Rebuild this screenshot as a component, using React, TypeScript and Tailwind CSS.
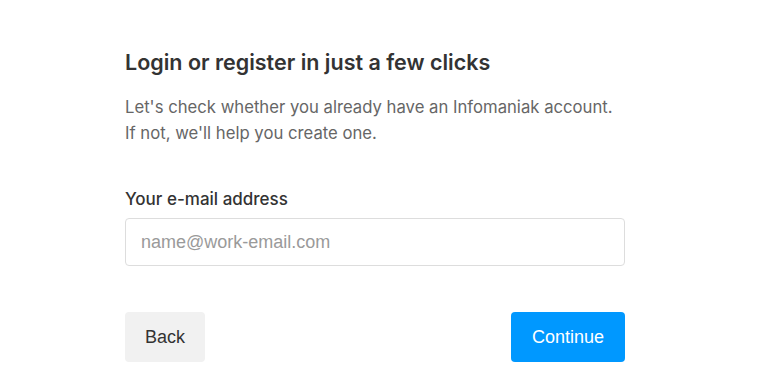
export default function App() {
  return (
    <div className="min-h-[390px] w-full bg-white font-['Inter',sans-serif]">
      <div className="ml-[125px] w-[500px] pt-[48px]">
        <h1 className="text-[21.5px] leading-[28px] font-semibold text-[#333333]">
          Login or register in just a few clicks
        </h1>
        <p className="mt-[18px] text-[16.7px] leading-[26px] text-[#666666]">
          Let's check whether you already have an Infomaniak account.
          <br />
          If not, we'll help you create one.
        </p>
        <label className="mt-[41px] block text-[17px] leading-[24px] font-medium text-[#333333]">
          Your e-mail address
        </label>
        <input
          type="email"
          placeholder="name@work-email.com"
          className="mt-[7px] block h-[48px] w-full rounded-[4px] border border-[#dddddd] px-[15px] font-['Liberation_Sans',sans-serif] text-[18px] text-[#333] placeholder:text-[#9a9a9a] outline-none"
        />
        <div className="mt-[46px] flex items-center justify-between">
          <button className="h-[50px] w-[80px] rounded-[4px] bg-[#f1f1f1] font-['Liberation_Sans',sans-serif] text-[18px] text-[#333333]">
            Back
          </button>
          <button className="h-[50px] w-[114px] rounded-[4px] bg-[#0098ff] font-['Liberation_Sans',sans-serif] text-[18px] text-white">
            Continue
          </button>
        </div>
      </div>
    </div>
  );
}
